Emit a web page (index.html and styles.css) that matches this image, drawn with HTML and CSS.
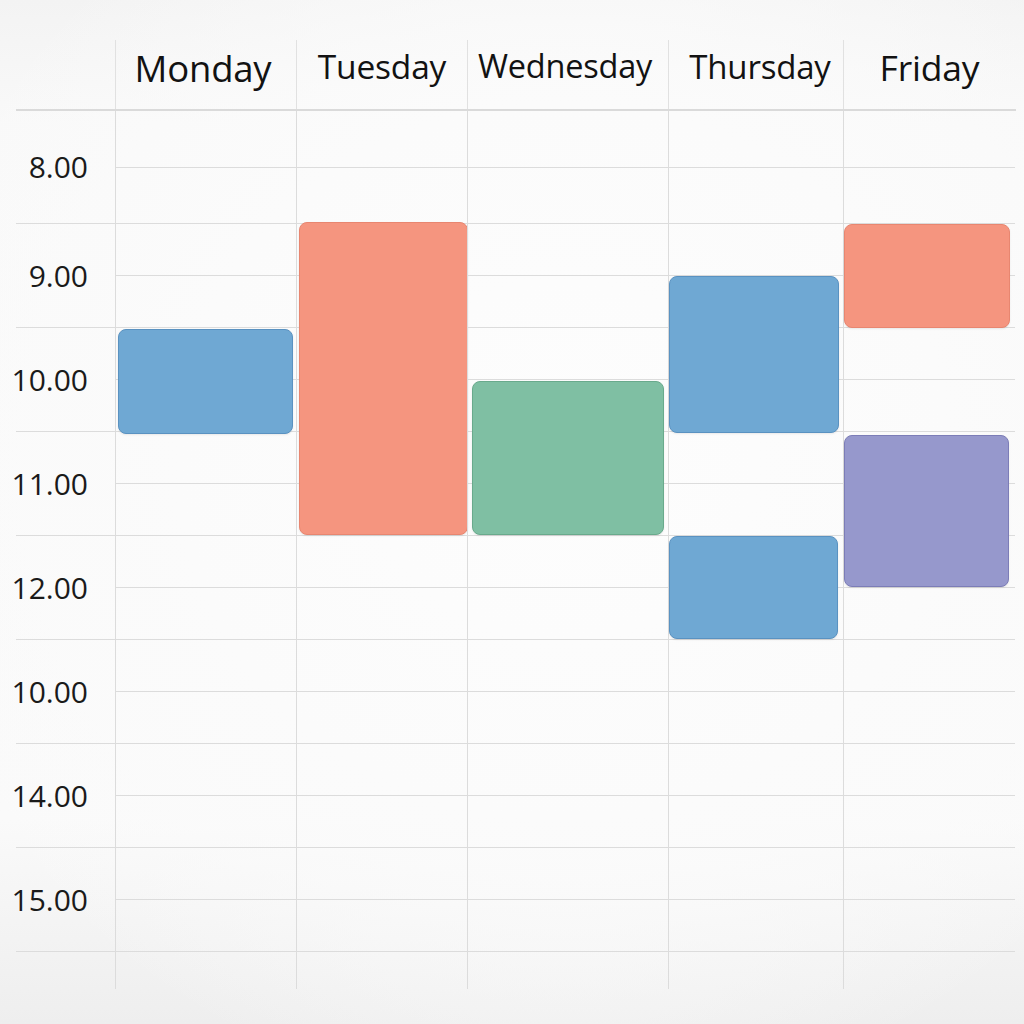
FILE: index.html
```html
<!DOCTYPE html>
<html lang="en">
<head>
<meta charset="utf-8">
<title>Weekly schedule</title>
<link rel="stylesheet" href="styles.css">
</head>
<body>
<div class="page">
  <div class="calendar">
    <div class="header">
      <div class="corner"></div>
      <div class="day-head col-mon"><span class="day-name name-mon">Monday</span></div>
      <div class="day-head col-tue"><span class="day-name name-tue">Tuesday</span></div>
      <div class="day-head col-wed"><span class="day-name name-wed">Wednesday</span></div>
      <div class="day-head col-thu"><span class="day-name name-thu">Thursday</span></div>
      <div class="day-head col-fri"><span class="day-name name-fri">Friday</span></div>
    </div>
    <div class="body">
      <div class="times">
        <div class="time time-first">8.00</div>
        <div class="time">9.00</div>
        <div class="time">10.00</div>
        <div class="time">11.00</div>
        <div class="time">12.00</div>
        <div class="time">10.00</div>
        <div class="time">14.00</div>
        <div class="time">15.00</div>
      </div>
      <div class="day col-mon">
        <div class="slot slot-a"></div><div class="slot slot-b"></div>
        <div class="slot"></div><div class="slot"></div><div class="slot"></div><div class="slot"></div>
        <div class="slot"></div><div class="slot"></div><div class="slot"></div><div class="slot"></div>
        <div class="slot"></div><div class="slot"></div><div class="slot"></div><div class="slot"></div>
        <div class="slot"></div><div class="slot"></div>
        <div class="event blue ev-mon"></div>
      </div>
      <div class="day col-tue">
        <div class="slot slot-a"></div><div class="slot slot-b"></div>
        <div class="slot"></div><div class="slot"></div><div class="slot"></div><div class="slot"></div>
        <div class="slot"></div><div class="slot"></div><div class="slot"></div><div class="slot"></div>
        <div class="slot"></div><div class="slot"></div><div class="slot"></div><div class="slot"></div>
        <div class="slot"></div><div class="slot"></div>
        <div class="event red ev-tue"></div>
      </div>
      <div class="day col-wed">
        <div class="slot slot-a"></div><div class="slot slot-b"></div>
        <div class="slot"></div><div class="slot"></div><div class="slot"></div><div class="slot"></div>
        <div class="slot"></div><div class="slot"></div><div class="slot"></div><div class="slot"></div>
        <div class="slot"></div><div class="slot"></div><div class="slot"></div><div class="slot"></div>
        <div class="slot"></div><div class="slot"></div>
        <div class="event green ev-wed"></div>
      </div>
      <div class="day col-thu">
        <div class="slot slot-a"></div><div class="slot slot-b"></div>
        <div class="slot"></div><div class="slot"></div><div class="slot"></div><div class="slot"></div>
        <div class="slot"></div><div class="slot"></div><div class="slot"></div><div class="slot"></div>
        <div class="slot"></div><div class="slot"></div><div class="slot"></div><div class="slot"></div>
        <div class="slot"></div><div class="slot"></div>
        <div class="event blue ev-thu1"></div>
        <div class="event blue ev-thu2"></div>
      </div>
      <div class="day col-fri">
        <div class="slot slot-a"></div><div class="slot slot-b"></div>
        <div class="slot"></div><div class="slot"></div><div class="slot"></div><div class="slot"></div>
        <div class="slot"></div><div class="slot"></div><div class="slot"></div><div class="slot"></div>
        <div class="slot"></div><div class="slot"></div><div class="slot"></div><div class="slot"></div>
        <div class="slot"></div><div class="slot"></div>
        <div class="event red ev-fri1"></div>
        <div class="event purple ev-fri2"></div>
      </div>
    </div>
  </div>
</div>
</body>
</html>
```

FILE: styles.css
```css
* {
  box-sizing: border-box;
}

html, body {
  margin: 0;
  padding: 0;
}

body {
  width: 1024px;
  height: 1024px;
  overflow: hidden;
  font-family: "Open Sans", "DejaVu Sans", sans-serif;
  color: #111;
  background:
    radial-gradient(ellipse 700px 650px at 55% 45%, #fdfdfd 0%, #fbfbfb 55%, rgba(251,251,251,0) 100%),
    linear-gradient(180deg, #f3f3f3 0%, #f9f9f9 12%, #fafafa 80%, #eeeeee 100%);
}

.page {
  width: 1024px;
  height: 1024px;
}

.calendar {
  width: 1016px;
  display: flex;
  flex-direction: column;
}

.header {
  display: flex;
  height: 111px;
  margin-left: 16px;
  border-bottom: 2px solid #dadada;
}

.corner {
  width: 99px;
}

.day-head {
  margin-top: 40px;
  border-left: 1px solid #e1e1e1;
  display: flex;
  justify-content: center;
  padding-top: 10px;
}

.day-name {
  font-size: 33px;
  font-weight: 500;
  line-height: 1;
  letter-spacing: -0.2px;
  color: #121212;
}

.name-mon {
  font-size: 36.5px;
  margin-left: -6px;
}

.name-tue {
  font-size: 33.5px;
}

.name-wed {
  font-size: 32.5px;
  margin-left: -6px;
}

.name-thu {
  font-size: 33px;
  margin-left: 8px;
}

.name-fri {
  font-size: 35.5px;
}

.col-mon { width: 181px; }
.col-tue { width: 171px; }
.col-wed { width: 201px; }
.col-thu { width: 175px; }
.col-fri { width: 172px; }

.body {
  display: flex;
  align-items: flex-start;
}

.times {
  width: 115px;
  padding-left: 16px;
  display: flex;
  flex-direction: column;
}

.time {
  height: 104px;
  border-bottom: 1px solid #dcdcdc;
  display: flex;
  align-items: center;
  justify-content: flex-end;
  padding-right: 27px;
  font-size: 30px;
  font-weight: 400;
  line-height: 1;
  color: #1a1a1a;
  letter-spacing: 0;
}

.time-first {
  height: 113px;
}

.day {
  position: relative;
  height: 878px;
  border-left: 1px solid #dcdcdc;
  display: flex;
  flex-direction: column;
}

.slot {
  height: 52px;
  flex: none;
  border-bottom: 1px solid #dcdcdc;
}

.slot-a { height: 57px; }
.slot-b { height: 56px; }

.event {
  position: absolute;
  border-radius: 8px;
  border: 1.5px solid;
  box-shadow: 0 1px 2px rgba(0, 0, 0, 0.08);
}

.blue {
  background: #6fa8d3;
  border-color: #5a92c1;
}

.red {
  background: #f5957f;
  border-color: #e88670;
}

.green {
  background: #7fbfa3;
  border-color: #69aa8c;
}

.purple {
  background: #9698cc;
  border-color: #7c7db7;
}

.ev-mon { left: 2px; width: 175px; top: 218px; height: 105px; }
.ev-tue { left: 2px; width: 169px; top: 111px; height: 313px; }
.ev-wed { left: 4px; width: 192px; top: 270px; height: 154px; }
.ev-thu1 { left: 0; width: 170px; top: 165px; height: 157px; }
.ev-thu2 { left: 0; width: 169px; top: 425px; height: 103px; }
.ev-fri1 { left: 0; width: 166px; top: 113px; height: 104px; }
.ev-fri2 { left: 0; width: 165px; top: 324px; height: 152px; }
```
